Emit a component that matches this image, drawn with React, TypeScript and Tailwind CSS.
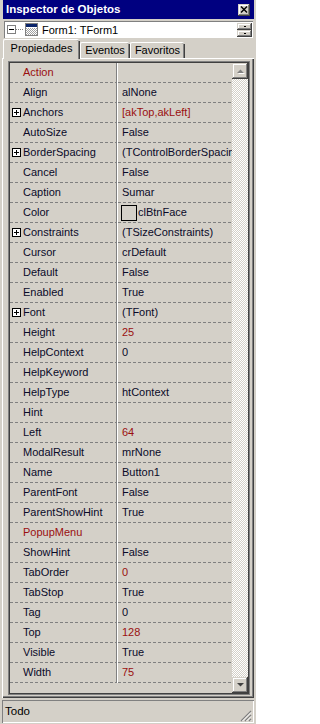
import React from "react";

type Prop = {
  name: string;
  value?: string;
  plus?: boolean;
  isRef?: boolean;
  changed?: boolean;
  swatch?: boolean;
};

const props: Prop[] = [
  { name: "Action", isRef: true },
  { name: "Align", value: "alNone" },
  { name: "Anchors", value: "[akTop,akLeft]", plus: true, changed: true },
  { name: "AutoSize", value: "False" },
  { name: "BorderSpacing", value: "(TControlBorderSpacing)", plus: true },
  { name: "Cancel", value: "False" },
  { name: "Caption", value: "Sumar" },
  { name: "Color", value: "clBtnFace", swatch: true },
  { name: "Constraints", value: "(TSizeConstraints)", plus: true },
  { name: "Cursor", value: "crDefault" },
  { name: "Default", value: "False" },
  { name: "Enabled", value: "True" },
  { name: "Font", value: "(TFont)", plus: true },
  { name: "Height", value: "25", changed: true },
  { name: "HelpContext", value: "0" },
  { name: "HelpKeyword" },
  { name: "HelpType", value: "htContext" },
  { name: "Hint" },
  { name: "Left", value: "64", changed: true },
  { name: "ModalResult", value: "mrNone" },
  { name: "Name", value: "Button1" },
  { name: "ParentFont", value: "False" },
  { name: "ParentShowHint", value: "True" },
  { name: "PopupMenu", isRef: true },
  { name: "ShowHint", value: "False" },
  { name: "TabOrder", value: "0", changed: true },
  { name: "TabStop", value: "True" },
  { name: "Tag", value: "0" },
  { name: "Top", value: "128", changed: true },
  { name: "Visible", value: "True" },
  { name: "Width", value: "75", changed: true },
];

const raised =
  "shadow-[inset_-1px_-1px_0_#404040,inset_1px_1px_0_#d4d0c8,inset_-2px_-2px_0_#808080,inset_2px_2px_0_#ffffff]";

function Dashes() {
  return (
    <div className="absolute bottom-0 left-0 right-0 h-px bg-[repeating-linear-gradient(90deg,#808080_0_3px,transparent_3px_5px)]" />
  );
}

function PlusBox() {
  return (
    <svg width="9" height="9" viewBox="0 0 9 9" className="shrink-0">
      <rect x="0.5" y="0.5" width="8" height="8" fill="#ffffff" stroke="#000000" />
      <path d="M2 4.5h5M4.5 2v5" stroke="#000000" />
    </svg>
  );
}

function PropRow({ p }: { p: Prop }) {
  return (
    <div className="flex h-[20px] min-w-0">
      <div className="relative flex w-[106px] shrink-0 items-center pb-px">
        {p.plus ? (
          <div className="ml-[2px] mr-[2px] flex">
            <PlusBox />
          </div>
        ) : (
          <div className="w-[13px]" />
        )}
        <span
          className={
            "whitespace-nowrap " + (p.isRef ? "text-[#9a0f0f]" : "text-[#0a0a28]")
          }
        >
          {p.name}
        </span>
        <Dashes />
      </div>
      <div className="w-px shrink-0 bg-[#808080]" />
      <div className="w-px shrink-0 bg-white" />
      <div className="relative flex w-0 min-w-0 flex-1 items-center overflow-hidden pb-px">
        {p.swatch ? (
          <>
            <div className="ml-[3px] h-[16px] w-[16px] shrink-0 border border-black bg-[#d4d0c8]" />
            <span className="ml-px whitespace-nowrap text-[#0a0a28]">{p.value}</span>
          </>
        ) : (
          <span
            className={
              "ml-[4px] whitespace-nowrap " +
              (p.changed ? "text-[#9a0f0f]" : "text-[#0a0a28]")
            }
          >
            {p.value}
          </span>
        )}
        <Dashes />
      </div>
    </div>
  );
}

function ScrollButton({ up }: { up?: boolean }) {
  return (
    <div className={"flex h-[16px] w-[16px] shrink-0 items-center justify-center bg-[#d4d0c8] " + raised}>
      {up ? (
        <svg width="9" height="6" viewBox="0 0 9 6">
          <path d="M1 5h7L4.5 1.5z" fill="#ffffff" transform="translate(1 1)" />
          <path d="M1 5h7L4.5 1.5z" fill="#808080" />
        </svg>
      ) : (
        <svg width="9" height="6" viewBox="0 0 9 6">
          <path d="M1 1h7L4.5 4.5z" fill="#404040" />
        </svg>
      )}
    </div>
  );
}

export default function App() {
  return (
    <div className="flex h-[724px] w-[256px] flex-col overflow-hidden bg-[#d4d0c8] font-['Liberation_Sans',Arial,sans-serif] text-[11px] text-black">
      {/* title bar */}
      <div className="ml-[3px] mr-[2px] flex h-[19px] shrink-0 items-center bg-[#000080] pl-[3px] pr-[4px]">
        <span className="flex-1 text-[11.5px] font-bold leading-none text-white">
          Inspector de Objetos
        </span>
        <div className={"flex h-[12px] w-[12px] items-center justify-center bg-[#d4d0c8] " + raised}>
          <svg width="8" height="7" viewBox="0 0 8 7">
            <path d="M1 0.5l6 6M7 0.5l-6 6" stroke="#000000" strokeWidth="1.4" />
          </svg>
        </div>
      </div>

      {/* component tree */}
      <div className="ml-[4px] mr-[3px] mt-[2px] flex h-[17px] shrink-0 items-center border-l border-t border-[#808080] bg-white">
        <svg width="34" height="14" viewBox="0 0 34 14" className="ml-[2px] shrink-0">
          <defs>
            <pattern id="chk" width="2" height="2" patternUnits="userSpaceOnUse">
              <rect width="2" height="2" fill="#ffffff" />
              <rect width="1" height="1" fill="#a0a0a0" />
              <rect x="1" y="1" width="1" height="1" fill="#a0a0a0" />
            </pattern>
          </defs>
          <rect x="0.5" y="2.5" width="8" height="8" fill="#ffffff" stroke="#808080" />
          <path d="M2 6.5h5" stroke="#000000" />
          <path d="M9 6.5h8" stroke="#808080" strokeDasharray="1 1" />
          <rect x="18.5" y="0.5" width="12" height="12" fill="#ffffff" stroke="#808080" />
          <rect x="19" y="1" width="11" height="3" fill="#0a246a" />
          <rect x="19" y="5" width="11" height="7" fill="url(#chk)" />
        </svg>
        <span className="ml-[1px] flex-1 whitespace-nowrap leading-none">Form1: TForm1</span>
        <div className="mr-[1px] flex flex-col">
          <div className={"flex h-[7px] w-[15px] items-center justify-center bg-[#d4d0c8] " + raised}>
            <div className="h-px w-[2px] bg-black" />
          </div>
          <div className={"flex h-[7px] w-[15px] items-center justify-center bg-[#d4d0c8] " + raised}>
            <div className="h-px w-[2px] bg-black" />
          </div>
        </div>
      </div>

      {/* tabs */}
      <div className="ml-[3px] mt-[1px] flex h-[19px] shrink-0 items-end">
        <div className="relative z-10 -mb-px flex h-[20px] w-[76px] items-center justify-center rounded-t-[2px] border-l border-t border-white bg-[#d4d0c8] pb-[2px] shadow-[inset_-1px_0_0_#808080]">
          <span className="leading-none">Propiedades</span>
          <div className="absolute -right-px top-[1px] bottom-0 w-px bg-[#404040]" />
        </div>
        <div className="relative ml-px flex h-[16px] w-[49px] items-center justify-center rounded-t-[2px] border-l border-t border-white shadow-[inset_-1px_0_0_#808080]">
          <span className="leading-none">Eventos</span>
          <div className="absolute -right-px top-[1px] bottom-0 w-px bg-[#404040]" />
        </div>
        <div className="relative ml-px flex h-[16px] w-[54px] items-center justify-center rounded-t-[2px] border-l border-t border-white shadow-[inset_-1px_0_0_#808080]">
          <span className="leading-none">Favoritos</span>
          <div className="absolute -right-px top-[1px] bottom-0 w-px bg-[#404040]" />
        </div>
      </div>

      {/* tab page */}
      <div className="mx-[2px] flex min-h-0 min-w-0 flex-1 flex-col border-l border-t border-white pb-[3px] pl-[5px] pr-[4px] pt-[2px] shadow-[inset_-1px_-1px_0_#404040,inset_-2px_-2px_0_#808080]">
        <div className="flex min-h-0 min-w-0 flex-1 border border-[#808080]">
          <div className="flex min-h-0 min-w-0 flex-1 border border-[#404040]">
            <div className="flex w-0 min-w-0 flex-1 flex-col">
              {props.map((p) => (
                <PropRow key={p.name} p={p} />
              ))}
            </div>
            <div className="flex w-[16px] shrink-0 flex-col">
              <ScrollButton up />
              <div className="flex-1 bg-[repeating-conic-gradient(#ffffff_0_25%,#d4d0c8_0_50%)] bg-[length:2px_2px]" />
              <ScrollButton />
            </div>
          </div>
        </div>
      </div>

      {/* status bar */}
      <div className="mx-[2px] mb-[1px] mt-[2px] flex h-[23px] shrink-0 items-center border-l border-t border-[#808080] shadow-[inset_-1px_-1px_0_#ffffff]">
        <span className="ml-[2px] flex-1 text-[11.5px] leading-none">Todo</span>
        <svg width="12" height="12" viewBox="0 0 12 12" className="mr-[2px] mt-[8px]">
          <path d="M11 1L1 11M11 5L5 11M11 9L9 11" stroke="#808080" strokeWidth="1.2" />
          <path d="M11 2.5L2.5 11M11 6.5L6.5 11M11 10.5L10.5 11" stroke="#ffffff" strokeWidth="1" />
        </svg>
      </div>
    </div>
  );
}
